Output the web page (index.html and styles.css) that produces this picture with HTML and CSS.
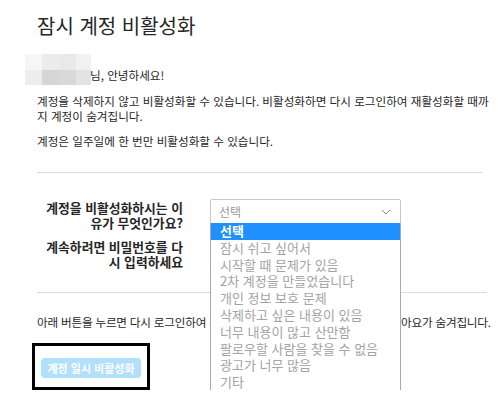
FILE: index.html
```html
<!DOCTYPE html>
<html lang="ko">
<head>
    <meta charset="UTF-8" />
    <title>잠시 계정 비활성화</title>
    <link rel="stylesheet" href="styles.css">
</head>
<body>
<div class="page">
    <h1>잠시 계정 비활성화</h1>

    <div class="greet">
        <div class="blur">
            <span class="c1"></span><span class="c2"></span><span class="c3"></span><span class="c4"></span>
            <span class="c5"></span><span class="c6"></span><span class="c7"></span><span class="c8"></span>
        </div>
        <span class="hello">님, 안녕하세요!</span>
    </div>

    <p>계정을 삭제하지 않고 비활성화할 수 있습니다. 비활성화하면 다시 로그인하여 재활성화할 때까지 계정이 숨겨집니다.</p>
    <p>계정은 일주일에 한 번만 비활성화할 수 있습니다.</p>

    <hr>

    <div class="form">
        <label>계정을 비활성화하시는 이<br>유가 무엇인가요?</label>
        <div class="field">
            <div class="select">선택
                <svg width="10" height="6" viewBox="0 0 10 6"><path d="M1 1l4 4 4-4" fill="none" stroke="#888" stroke-width="1"/></svg>
            </div>
            <ul class="menu">
                <li class="active">선택</li>
                <li>잠시 쉬고 싶어서</li>
                <li>시작할 때 문제가 있음</li>
                <li>2차 계정을 만들었습니다</li>
                <li>개인 정보 보호 문제</li>
                <li>삭제하고 싶은 내용이 있음</li>
                <li>너무 내용이 많고 산만함</li>
                <li>팔로우할 사람을 찾을 수 없음</li>
                <li>광고가 너무 많음</li>
                <li>기타</li>
            </ul>
        </div>
        <label>계속하려면 비밀번호를 다<br>시 입력하세요</label>
        <div></div>
    </div>

    <hr class="low">

    <p class="note">아래 버튼을 누르면 다시 로그인하여 재활성화할 때까지 프로필, 사진, 댓글, 좋아요가 숨겨집니다.</p>

    <div class="btnbox">
        <button disabled>계정 일시 비활성화</button>
    </div>
</div>
</body>
</html>
```

FILE: styles.css
```css
body {
  margin: 0;
  background: #fff;
  font-family: 'Noto Sans CJK KR', 'Noto Sans', sans-serif;
  color: #262626;
  overflow: hidden;
}
.page {
  padding: 0 8px 0 37px;
}
h1 {
  font-size: 20px;
  font-weight: 400;
  margin: 12px 0 0;
  line-height: 28px;
}
.greet {
  display: flex;
  align-items: flex-end;
  margin: 14px 0 0 -12px;
  height: 31px;
}
.blur {
  display: grid;
  grid-template-columns: 17px 17px 17px 15px;
  grid-template-rows: 16px 15px;
  width: 66px;
}
.blur span { display: block; }
.c1 { background: #f6f6f6; }
.c2 { background: #ececec; }
.c3 { background: #e9e9e9; }
.c4 { background: #f1f1f1; }
.c5 { background: #ededed; }
.c6 { background: #d6d6d6; }
.c7 { background: #d9d9d9; }
.c8 { background: #e3e3e3; }
.hello {
  font-size: 11.6px;
  line-height: 14px;
  margin: 0 0 3px -1px;
}
p {
  font-size: 11.6px;
  line-height: 15px;
  margin: 9px 0 0;
}
p + p {
  margin-top: 10px;
}
hr {
  border: 0;
  border-top: 1px solid #dbdbdb;
  margin: 23px 10px 0 0;
}
.form {
  display: grid;
  grid-template-columns: 146px 191px;
  column-gap: 27px;
  row-gap: 8px;
  margin-top: 26px;
}
label {
  text-align: right;
  font-size: 12.8px;
  font-weight: 700;
  line-height: 15px;
  padding-top: 1px;
}
.field {
  position: relative;
}
.select {
  height: 23px;
  border: 1px solid #c7c7c7;
  border-radius: 2px;
  display: flex;
  align-items: center;
  justify-content: space-between;
  padding: 0 9px 0 8px;
  font-size: 12px;
  color: #999;
}
.menu {
  position: absolute;
  top: 24px;
  left: 0;
  width: 189px;
  margin: 0;
  padding: 0 0 2px;
  list-style: none;
  background: #fff;
  border: 1px solid #a9a9a9;
  border-top: 0;
  z-index: 2;
}
.menu li {
  font-size: 13px;
  line-height: 16.8px;
  padding-left: 9px;
  color: #a3a3a3;
}
.menu li.active {
  background: #1e90ff;
  color: #fff;
  font-weight: 700;
}
hr.low {
  margin-top: 23px;
  margin-right: 5px;
}
.note {
  margin-top: 22px;
  white-space: nowrap;
  letter-spacing: -0.2px;
}
.btnbox {
  width: 112px;
  height: 41px;
  border: 3px solid #000;
  margin: 13px 0 0 -5px;
  padding: 0;
  display: flex;
  align-items: flex-start;
}
button {
  margin: 12px 0 0 6px;
  width: 100px;
  height: 20px;
  border: 0;
  border-radius: 4px;
  background: #b2dffc;
  color: #fff;
  font-family: inherit;
  font-size: 11px;
  font-weight: 700;
  padding: 0;
}
```
